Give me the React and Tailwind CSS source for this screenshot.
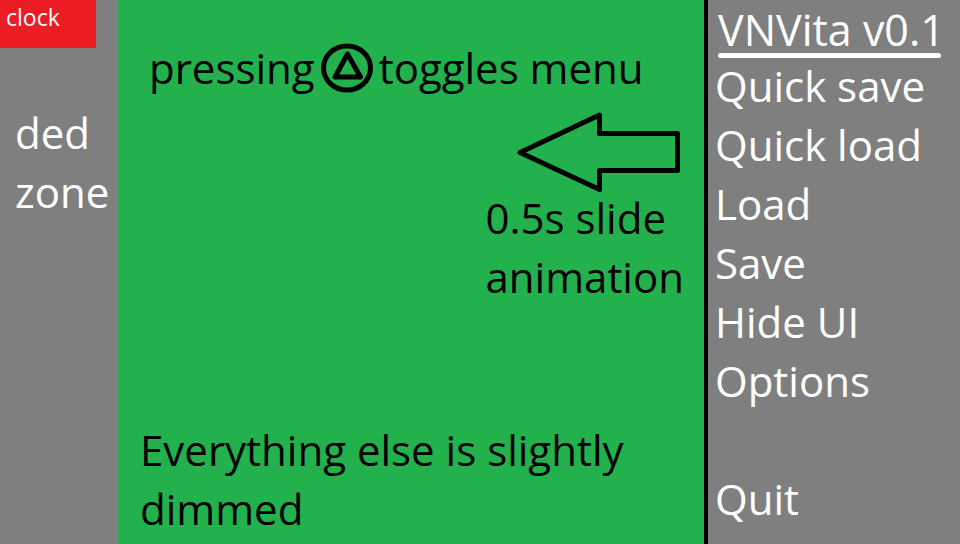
import React from "react";

const actions = ["Quick save", "Quick load", "Load", "Save", "Hide UI", "Options"];

function TriangleIcon() {
  return (
    <svg className="h-[50px] w-[52px] shrink-0" viewBox="0 0 52 50" fill="none" stroke="currentColor" role="img" aria-label="triangle button">
      <ellipse cx="26" cy="25" rx="23.5" ry="22" strokeWidth="5" />
      <path d="M26.5 11 L14 34 H39.500 Z" strokeWidth="5" strokeLinejoin="round" />
    </svg>
  );
}

function SlideArrow() {
  return (
    <svg className="h-[80px] w-[164px]" viewBox="0 0 164 80" fill="none" stroke="currentColor" aria-hidden="true">
      <path d="M4 40.5 L83.500 3 V21.500 H161.500 V58.500 H83.500 V77.500 Z" strokeWidth="5" strokeLinejoin="round" />
    </svg>
  );
}

export default function App() {
  return (
    <div className="flex min-h-screen bg-[#7f7f7f] font-['Open_Sans',sans-serif] text-[42px] leading-[59px] text-white">
      <aside className="w-[118px] shrink-0">
        <div className="h-12 w-24 bg-[#ed1c24] px-1.5 pt-[3px] text-[23px] leading-7">clock</div>
        <p className="pt-[55px] pl-[15px]">
          ded
          <br />
          zone
        </p>
      </aside>

      <main className="flex min-w-0 flex-1 flex-col bg-[#22b14c] text-black">
        <div className="flex items-center gap-1.5 whitespace-nowrap pt-[38px] pl-[31px]">
          <span>pressing</span>
          <TriangleIcon />
          <span>toggles menu</span>
        </div>
        <div className="mr-6 mt-[15px] self-end">
          <SlideArrow />
        </div>
        <p className="-mt-1 mr-5 self-end whitespace-nowrap">
          0.5s slide
          <br />
          animation
        </p>
        <p className="mt-auto whitespace-nowrap pb-1.5 pl-[22px]">
          Everything else is slightly
          <br />
          dimmed
        </p>
      </main>

      <nav className="flex w-64 shrink-0 flex-col border-l-4 border-black leading-[50px] whitespace-nowrap">
        <div className="pt-[5px] pl-[10px]">
          <h1 className="-mb-0.5 text-[43px]">VNVita v0.1</h1>
          <div className="h-[5px] w-[223px] rounded-full bg-white" />
        </div>
        <div className="flex flex-1 flex-col items-start gap-[9px] pt-[3px] pb-5 pl-[7px]">
          {actions.map((label) => (
            <button key={label} type="button">{label}</button>
          ))}
          <button type="button" className="mt-auto">Quit</button>
        </div>
      </nav>
    </div>
  );
}
